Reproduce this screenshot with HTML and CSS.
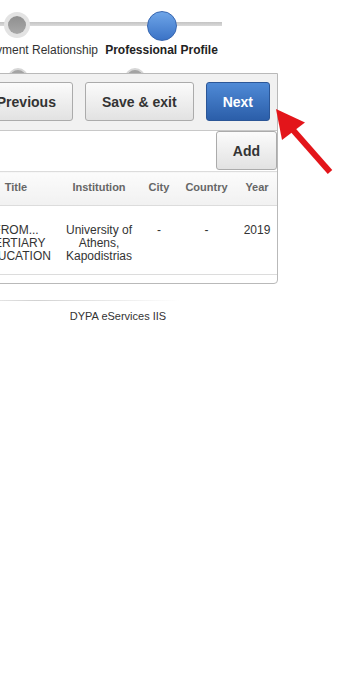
FILE: index.html
```html
<!DOCTYPE html>
<html lang="en">
<head>
    <meta charset="UTF-8">
    <meta name="viewport" content="width=device-width, initial-scale=1.0">
    <title>Professional Profile</title>
    <link rel="stylesheet" href="styles.css">
</head>
<body>
    <div class="page">
        <!-- wizard steps -->
        <div class="stepper">
            <div class="step done">
                <span class="dot-box"><span class="dot"></span></span>
                <span class="label shift">Employment Relationship</span>
            </div>
            <div class="step current">
                <span class="dot-box"><span class="dot"></span></span>
                <span class="label">Professional Profile</span>
            </div>
        </div>
        <div class="stepper-next">
            <span class="dot first"></span>
            <span class="dot"></span>
        </div>

        <div class="panel">
            <div class="toolbar">
                <button class="btn">Previous</button>
                <button class="btn">Save &amp; exit</button>
                <button class="btn primary">Next</button>
            </div>
            <div class="add-row">
                <button class="btn">Add</button>
            </div>
            <table class="grid">
                <colgroup>
                    <col style="width: 35px">
                    <col style="width: 80px">
                    <col style="width: 86px">
                    <col style="width: 34px">
                    <col style="width: 61px">
                    <col style="width: 40px">
                </colgroup>
                <thead>
                    <tr><th></th><th>Title</th><th>Institution</th><th>City</th><th>Country</th><th>Year</th></tr>
                </thead>
                <tbody>
                    <tr>
                        <td></td>
                        <td>FROM...<br>TERTIARY<br>EDUCATION</td>
                        <td>University of Athens, Kapodistrias</td>
                        <td>-</td>
                        <td>-</td>
                        <td>2019</td>
                    </tr>
                </tbody>
            </table>
        </div>

        <div class="footer-line"></div>
        <div class="footer">DYPA eServices IIS</div>
    </div>

    <!-- red pointer arrow -->
    <svg class="pointer" width="70" height="80" viewBox="0 0 70 80">
        <line x1="25" y1="30" x2="62" y2="72" stroke="#e3151a" stroke-width="6"/>
        <polygon points="8,9 37,22.5 14,40" fill="#e3151a"/>
    </svg>
</body>
</html>
```

FILE: styles.css
```css
html, body {
    margin: 0;
    overflow: hidden;
    background: #fff;
}
body {
    font-family: "Liberation Sans", Arial, sans-serif;
    color: #333;
    position: relative;
}
.page {
    margin-left: -100px;
    width: 436px;
}

/* steps */
.stepper {
    position: relative;
    display: flex;
    padding-left: 44px;
    height: 57px;
}
.stepper::before {
    content: "";
    position: absolute;
    left: 0;
    top: 22px;
    width: 322px;
    height: 4px;
    background: linear-gradient(#c4c4c4, #dadada);
}
.step {
    width: 145px;
    display: flex;
    flex-direction: column;
    align-items: center;
}
.dot-box {
    height: 30px;
    margin-top: 11px;
    display: flex;
    align-items: center;
    justify-content: center;
    position: relative;
}
.step .dot {
    display: block;
    border-radius: 50%;
}
.step.done .dot {
    width: 18px;
    height: 18px;
    background: linear-gradient(#8f8f8f, #a8a8a8);
    box-shadow: 0 0 0 4px #e3e3e3;
    margin-top: -2px;
}
.step.current .dot {
    width: 28px;
    height: 28px;
    background: linear-gradient(#6ea5e8, #3b73c6);
    border: 1px solid #3766b0;
}
.label {
    margin-top: 2px;
    font-size: 12px;
    line-height: 14px;
    white-space: nowrap;
    color: #333;
}
.label.shift {
    margin-left: 27px;
}
.step.current .label {
    font-weight: bold;
    color: #222;
}
.stepper-next {
    height: 5px;
    margin-top: 11px;
    overflow: hidden;
    display: flex;
}
.stepper-next .dot {
    width: 16px;
    height: 16px;
    border-radius: 50%;
    background: #a3a3a3;
    border: 2px solid #d6d6d6;
    margin-left: 97px;
}
.stepper-next .dot.first {
    margin-left: 108px;
}

/* panel */
.panel {
    margin-left: 40px;
    width: 338px;
    box-sizing: border-box;
    border: 1px solid #b9b9b9;
    border-radius: 0 0 4px 0;
    background: #fff;
    padding-bottom: 8px;
}
.toolbar {
    display: flex;
    justify-content: flex-end;
    gap: 12px;
    padding: 8px 7px 9px;
    background: #f1f1f1;
    border-bottom: 1px solid #c8c8c8;
}
.btn {
    height: 39px;
    box-sizing: border-box;
    padding: 0 16px;
    font-family: "Liberation Sans", Arial, sans-serif;
    font-size: 14px;
    font-weight: bold;
    color: #333;
    border: 1px solid #ababab;
    border-radius: 3px;
    background: linear-gradient(#fbfbfb, #e2e2e2);
    white-space: nowrap;
}
.btn.primary {
    color: #fff;
    border-color: #2b5697;
    background: linear-gradient(#4f8ad6, #2b5ea9);
}
.add-row {
    display: flex;
    justify-content: flex-end;
    padding-bottom: 1px;
}

/* table */
.grid {
    width: 100%;
    table-layout: fixed;
    border-collapse: collapse;
}
.grid th {
    padding: 9px 2px 11px;
    font-size: 11px;
    line-height: 13px;
    font-weight: bold;
    color: #666;
    text-align: center;
    background: linear-gradient(#fbfbfb, #f1f1f1);
    border-top: 1px solid #dcdcdc;
    border-bottom: 1px solid #dcdcdc;
}
.grid td {
    padding: 18px 3px 11px;
    font-size: 12px;
    line-height: 13px;
    text-align: center;
    vertical-align: top;
    color: #333;
    border-bottom: 1px solid #dcdcdc;
}

/* footer */
.footer-line {
    margin: 16px 0 0 40px;
    width: 240px;
    height: 1px;
    background: linear-gradient(to right, transparent, #d2d2d2 40%, transparent);
}
.footer {
    margin-top: 9px;
    font-size: 11px;
    line-height: 13px;
    text-align: center;
    color: #333;
}

.pointer {
    position: absolute;
    left: 268px;
    top: 100px;
}
```
